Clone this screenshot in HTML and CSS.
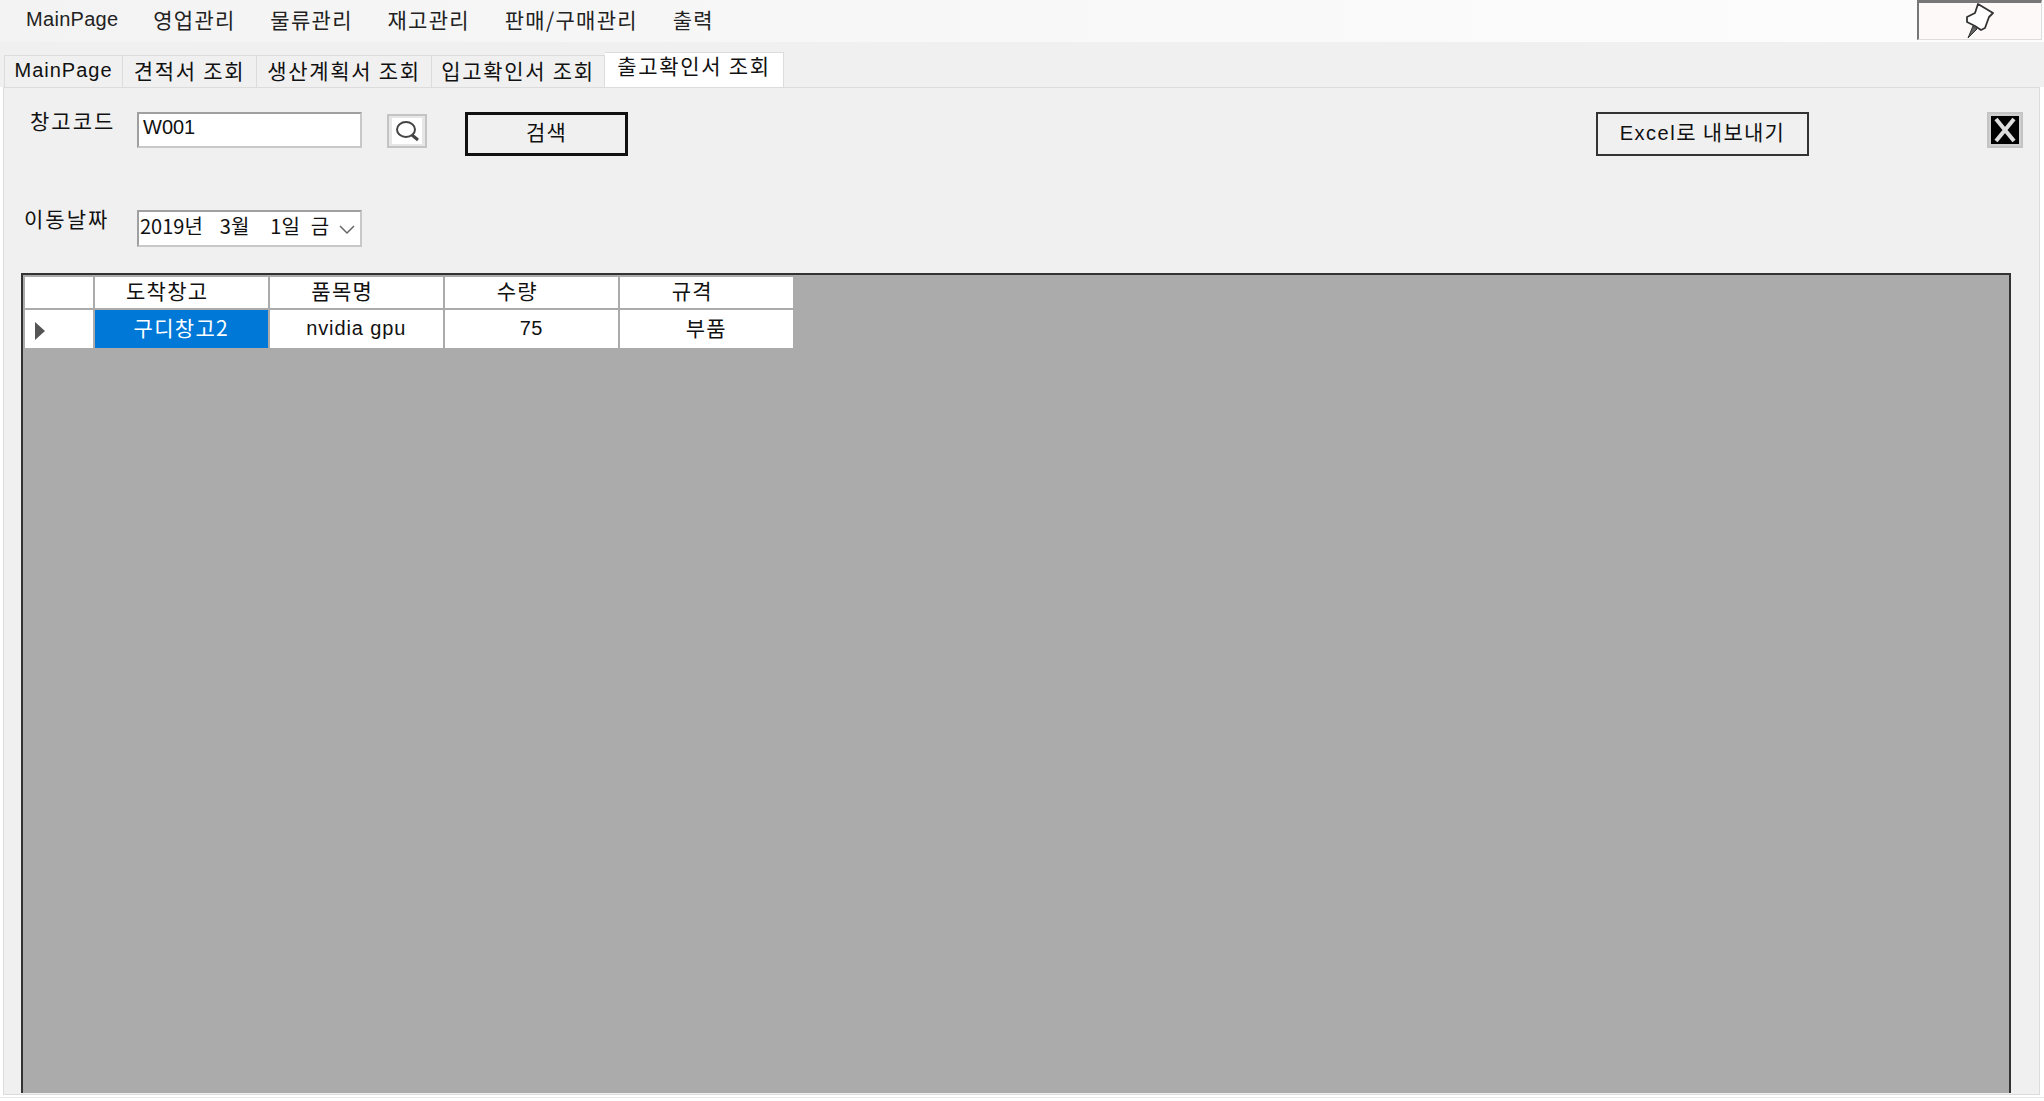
FILE: index.html
```html
<!doctype html>
<html>
<head>
<meta charset="utf-8">
<title>출고확인서 조회</title>
<link rel="stylesheet" href="styles.css">
</head>
<body>
	<div class="menubar">
		<div class="menulist">
			<span class="latin">MainPage</span>
			<span>영업관리</span>
			<span>물류관리</span>
			<span>재고관리</span>
			<span>판매/구매관리</span>
			<span>출력</span>
		</div>
		<div class="pinbtn">
			<svg width="30" height="36" viewBox="0 0 30 36">
				<path d="M7 23 L2 35 L11 26 Z" fill="#666" stroke="#333" stroke-width="1"/>
				<path d="M12 1 L27 10 L23 14 L19 25 L15 27 L9 23 L1 19 L1 14 L9 10 Z" fill="#fff" stroke="#333" stroke-width="1.8" stroke-linejoin="round"/>
			</svg>
		</div>
	</div>

	<div class="tabs">
		<div class="tab tab1 latin">MainPage</div>
		<div class="tab tab2">견적서 조회</div>
		<div class="tab tab3">생산계획서 조회</div>
		<div class="tab tab4">입고확인서 조회</div>
		<div class="tab tab5 active">출고확인서 조회</div>
	</div>

	<div class="panel">
		<div class="row row1">
			<label class="lbl lbl1">창고코드</label>
			<div class="field latin">W001</div>
			<div class="searchicon">
				<svg width="30" height="26" viewBox="0 0 30 26">
					<rect width="30" height="26" fill="#fff"/>
					<ellipse cx="14" cy="11.5" rx="9" ry="7.5" fill="none" stroke="#444" stroke-width="2"/>
					<path d="M20 17 L26 22" stroke="#444" stroke-width="3"/>
				</svg>
			</div>
			<div class="btn btnsearch">검색</div>
			<div class="btn btnexcel"><span class="latin">Excel</span>로 내보내기</div>
			<div class="closebtn">
				<svg width="28" height="28" viewBox="0 0 28 28">
					<rect width="28" height="28" fill="#000"/>
					<path d="M5 3 L23 25 M23 3 L5 25" stroke="#ddd" stroke-width="4"/>
				</svg>
			</div>
		</div>
		<div class="row row2">
			<label class="lbl lbl2">이동날짜</label>
			<div class="field datefield">
				<span>2019년</span><span>3월</span><span class="dday">1일</span><span class="dname">금</span>
				<svg class="chev" width="16" height="10" viewBox="0 0 16 10"><path d="M1 1 L8 8 L15 1" fill="none" stroke="#666" stroke-width="1.5"/></svg>
			</div>
		</div>

		<div class="gridview">
			<div class="gridtable">
				<div class="cell corner"></div>
				<div class="cell head">도착창고</div>
				<div class="cell head">품목명</div>
				<div class="cell head">수량</div>
				<div class="cell head">규격</div>
				<div class="cell rowhead"><i class="arrow"></i></div>
				<div class="cell selected">구디창고2</div>
				<div class="cell latin gpu">nvidia gpu</div>
				<div class="cell latin qty">75</div>
				<div class="cell">부품</div>
			</div>
		</div>
	</div>
	<div class="footline"></div>
</body>
</html>
```

FILE: styles.css
```css
html, body {
	margin: 0;
	height: 100%;
	overflow: hidden;
}

body {
	background-color: #fff;
	color: #111;
	font-family: "Noto Sans CJK KR", "Liberation Sans", sans-serif;
	font-size: 21px;
	line-height: 24px;
	letter-spacing: 1.3px;
	display: flex;
	flex-direction: column;
}

.latin {
	font-family: "Liberation Sans", "Noto Sans CJK KR", sans-serif;
	font-size: 20px;
	letter-spacing: 0.3px;
}

/* top menu */
.menubar {
	height: 42px;
	flex: none;
	background: linear-gradient(to right, #f3f3f3, #fdfdfd);
	display: flex;
	justify-content: space-between;
	padding-left: 26px;
	padding-right: 2px;
}

.menulist {
	display: flex;
	gap: 34.7px;
	padding-top: 7px;
	color: #222;
}

.pinbtn {
	width: 125px;
	height: 40px;
	background-color: #fdf9f9;
	border-top: 3px solid #777;
	border-left: 2px solid #777;
	border-right: 1px solid #ddd;
	border-bottom: 1px solid #ddd;
	box-sizing: border-box;
	padding-left: 47px;
	overflow: hidden;
}

/* tabs */
.tabs {
	height: 45px;
	flex: none;
	background-color: #f0f0f0;
	display: flex;
	align-items: flex-end;
	padding-left: 4px;
	letter-spacing: 1.7px;
}

.tab {
	height: 32px;
	box-sizing: border-box;
	background-color: #f0f0f0;
	border: 1px solid #dcdcdc;
	border-bottom: none;
	border-left: none;
	text-align: center;
	padding-top: 2px;
	white-space: nowrap;
}

.tab1 { width: 119px; border-left: 1px solid #dcdcdc; letter-spacing: 1px; }
.tab2 { width: 134px; }
.tab3 { width: 175px; }
.tab4 { width: 173px; }

.tab5 {
	width: 179px;
	height: 35px;
	padding-top: 0;
}

.active {
	background-color: #fff;
}

/* main panel */
.panel {
	width: 2037px;
	height: 1008px;
	flex: none;
	margin-left: 3px;
	box-sizing: border-box;
	background-color: #f0f0f0;
	border: 1px solid #dcdcdc;
	position: relative;
}

.footline {
	height: 1px;
	margin-top: 2px;
	background-color: #e6e6e6;
	flex: none;
}

.row {
	display: flex;
	align-items: flex-start;
}

.row1 {
	height: 44px;
	margin-top: 24px;
}

.row2 {
	height: 37px;
	margin-top: 54px;
}

.lbl {
	letter-spacing: 2px;
	white-space: nowrap;
	margin-top: -4px;
}

.lbl1 {
	width: 107px;
	margin-left: 26px;
}

.lbl2 {
	margin-left: 20px;
	width: 113px;
}

.field {
	width: 225px;
	height: 36px;
	box-sizing: border-box;
	background-color: #fff;
	border: 2px solid #a0a0a0;
	border-right-color: #c8c8c8;
	border-bottom-color: #c8c8c8;
	padding-left: 4px;
	line-height: 26px;
	letter-spacing: 0;
}

.row2 .lbl2 + .field {
	height: 37px;
	font-size: 20px;
	display: flex;
	gap: 17px;
	padding-left: 1px;
	position: relative;
	letter-spacing: 0;
	line-height: 28px;
}

.dday {
	margin-left: 4px;
}

.dname {
	margin-left: -6px;
}

.chev {
	position: absolute;
	right: 5px;
	top: 13px;
}

.searchicon {
	width: 40px;
	height: 34px;
	box-sizing: border-box;
	margin-left: 25px;
	margin-top: 2px;
	background-color: #e6e6e6;
	border: 2px solid #c4c4c4;
	padding: 2px 3px;
}

.searchicon svg, .closebtn svg {
	display: block;
}

.btn {
	background-color: #f0f0f0;
	box-sizing: border-box;
	text-align: center;
}

.btnsearch {
	width: 163px;
	height: 44px;
	margin-left: 38px;
	border: 3px solid #111;
	line-height: 32px;
}

.btnexcel {
	width: 213px;
	height: 44px;
	margin-left: 968px;
	border: 2px solid #333;
	line-height: 34px;
}

.btnexcel .latin {
	letter-spacing: 1.5px;
}

.closebtn {
	width: 36px;
	height: 36px;
	box-sizing: border-box;
	margin-left: 178px;
	background-color: #cfcfcf;
	border: 2px solid #c4c4c4;
	padding: 2px;
}

/* data grid */
.gridview {
	width: 1990px;
	height: 820px;
	margin-left: 17px;
	margin-top: 26px;
	box-sizing: border-box;
	background-color: #ababab;
	border: 2px solid #333;
	border-bottom: none;
	padding: 2px;
}

.gridtable {
	display: grid;
	grid-template-columns: 68px repeat(4, 173.5px);
	grid-template-rows: 31px 38px;
	column-gap: 1.5px;
	row-gap: 2px;
	width: 770px;
}

.cell {
	background-color: #fff;
	text-align: center;
	line-height: 34px;
}

.gpu {
	letter-spacing: 0.9px;
	line-height: 36px;
}

.qty {
	line-height: 36px;
}

.head {
	line-height: 26px;
	padding-right: 28px;
}

.corner, .rowhead {
	position: relative;
}

.selected {
	background-color: #0078d7;
	color: #fff;
}

.arrow {
	position: absolute;
	left: 10px;
	top: 12px;
	border-left: 10px solid #555;
	border-top: 9px solid transparent;
	border-bottom: 9px solid transparent;
}
```
